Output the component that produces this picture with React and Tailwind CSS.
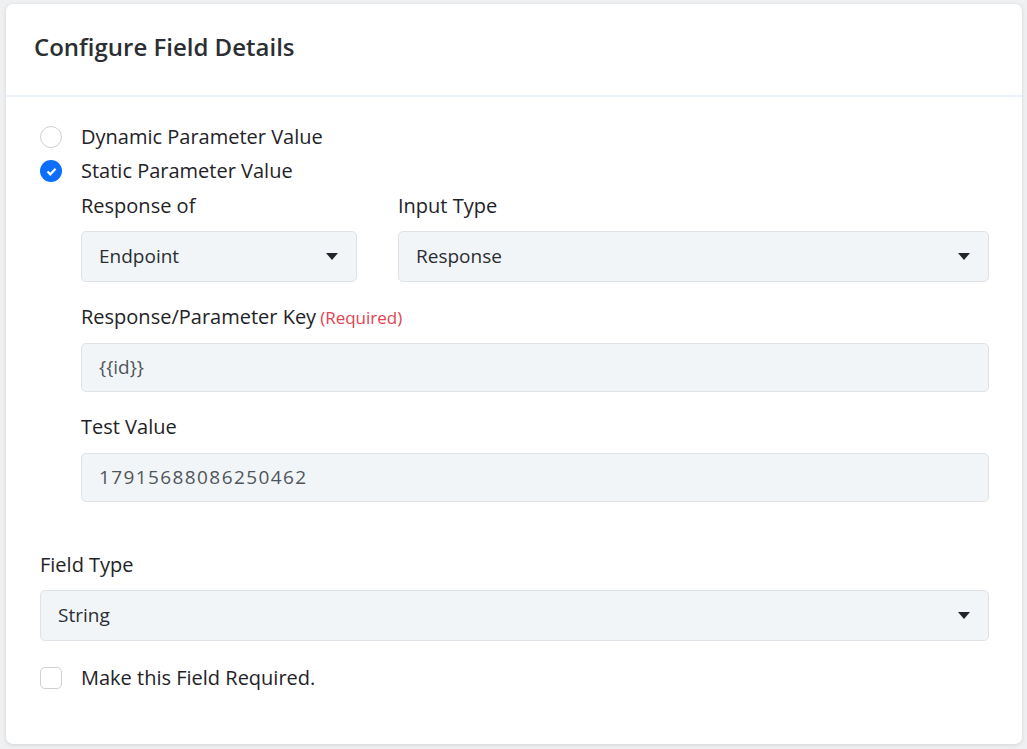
import { useState } from 'react';

function Caret() {
  return (
    <svg width="12" height="7" viewBox="0 0 12 7" className="shrink-0">
      <path d="M0 0h12L6 7z" fill="#212529" />
    </svg>
  );
}

function Select({ value, className = '' }) {
  return (
    <div
      className={`flex h-[51px] items-center justify-between rounded-[5px] border border-[#dfe3e8] bg-[#f2f5f8] pl-[17px] pr-[18px] text-[19px] text-[#2a2e33] ${className}`}
    >
      <span>{value}</span>
      <Caret />
    </div>
  );
}

function Input({ value, wide }) {
  return (
    <div
      className={`flex h-[49px] items-center rounded-[5px] border border-[#dfe3e8] bg-[#f2f5f8] px-[17px] text-[19px] text-[#50555b] ${wide ? 'tracking-[1.4px]' : ''}`}
    >
      {value}
    </div>
  );
}

function Radio({ checked }) {
  if (checked) {
    return (
      <span className="flex h-[22px] w-[22px] shrink-0 items-center justify-center rounded-full bg-[#0d6efd]">
        <svg width="11" height="9" viewBox="0 0 11 9">
          <path d="M1.5 4.5l2.8 2.8L9.5 1.8" stroke="#fff" strokeWidth="2.2" fill="none" />
        </svg>
      </span>
    );
  }
  return <span className="h-[22px] w-[22px] shrink-0 rounded-full border border-[#ccd1d6] bg-white" />;
}

export default function App() {
  const [mode, setMode] = useState('static');

  return (
    <div
      className="min-h-screen bg-[#eef0f2] pl-[6px] pr-[5px] pt-[4px]"
      style={{ fontFamily: '"Open Sans", "Noto Sans", sans-serif' }}
    >
      <div className="rounded-[7px] bg-white shadow-[0_1px_4px_rgba(0,0,0,0.12)]">
        <div className="flex h-[93px] items-center border-b-2 border-[#edf3fa] pb-[6px] pl-[28px]">
          <h2 className="text-[24px] font-semibold text-[#2b2f33]">Configure Field Details</h2>
        </div>

        <div className="pl-[34px] pr-[33px] pt-[29px] pb-[51px] text-[20px] text-[#1f2327]">
          <div className="flex flex-col gap-[12px]">
            <label className="flex h-[22px] items-center gap-[19px]" onClick={() => setMode('dynamic')}>
              <Radio checked={mode === 'dynamic'} />
              Dynamic Parameter Value
            </label>
            <label className="flex h-[22px] items-center gap-[19px]" onClick={() => setMode('static')}>
              <Radio checked={mode === 'static'} />
              Static Parameter Value
            </label>
          </div>

          <div className="pl-[41px] pt-[12px]">
            <div className="flex gap-[41px]">
              <div className="w-[276px]">
                <div className="mb-[13px] leading-[24px]">Response of</div>
                <Select value="Endpoint" />
              </div>
              <div className="flex-1">
                <div className="mb-[13px] leading-[24px]">Input Type</div>
                <Select value="Response" />
              </div>
            </div>

            <div className="mt-[23px] mb-[13px] leading-[24px]">
              Response/Parameter Key
              <span className="ml-[4px] text-[17px] text-[#e2434f]">(Required)</span>
            </div>
            <Input value="{{id}}" />

            <div className="mt-[23px] mb-[14px] leading-[24px]">Test Value</div>
            <Input value="17915688086250462" wide />
          </div>

          <div className="mt-[51px] mb-[13px] leading-[24px]">Field Type</div>
          <Select value="String" />

          <label className="mt-[22px] flex items-center gap-[19px]">
            <span className="h-[22px] w-[22px] shrink-0 rounded-[5px] border border-[#ccd1d6] bg-white" />
            Make this Field Required.
          </label>
        </div>
      </div>
    </div>
  );
}
